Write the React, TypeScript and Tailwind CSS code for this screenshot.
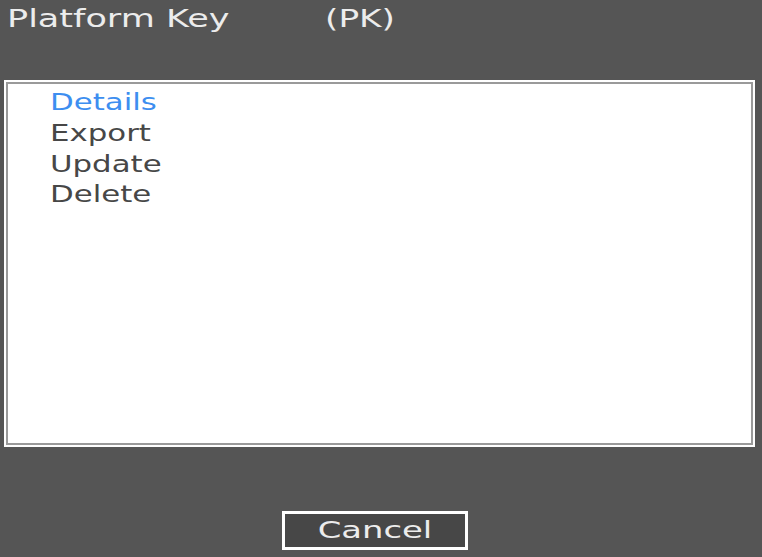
import React from "react";

export default function App() {
  const items = ["Details", "Export", "Update", "Delete"];
  return (
    <div
      className="w-[762px] h-[557px] bg-[#555555] flex flex-col overflow-hidden"
      style={{ fontFamily: '"DejaVu Sans", sans-serif' }}
    >
      <div className="h-[40px] flex items-start pl-[7px] pt-[4px] text-[24px] leading-[30px] text-[#ececec]">
        <span className="w-[318px]">
          <span className="inline-block origin-left scale-x-[1.46]">Platform Key</span>
        </span>
        <span className="inline-block origin-left scale-x-[1.43]">(PK)</span>
      </div>
      <div className="h-[40px]" />
      <div className="mx-[4px] w-[751px] h-[367px] border-2 border-white bg-white">
        <div className="w-full h-full border-2 border-[#9a9a9a] pt-[3px] pl-[42px] flex flex-col">
          {items.map((it, i) => (
            <div
              key={it}
              className={`text-[23px] leading-[30.8px] ${i === 0 ? "text-[#3d8ef0]" : "text-[#474747]"}`}
            >
              <span className="inline-block origin-left scale-x-[1.34]">{it}</span>
            </div>
          ))}
        </div>
      </div>
      <div className="flex-1 flex justify-center items-end pb-[7px]">
        <div className="ml-[-12px] w-[186px] h-[39px] border-[3px] border-white bg-[#474747] flex items-center justify-center text-[23px] text-[#ececec]">
          <span className="inline-block scale-x-[1.47]">Cancel</span>
        </div>
      </div>
    </div>
  );
}
